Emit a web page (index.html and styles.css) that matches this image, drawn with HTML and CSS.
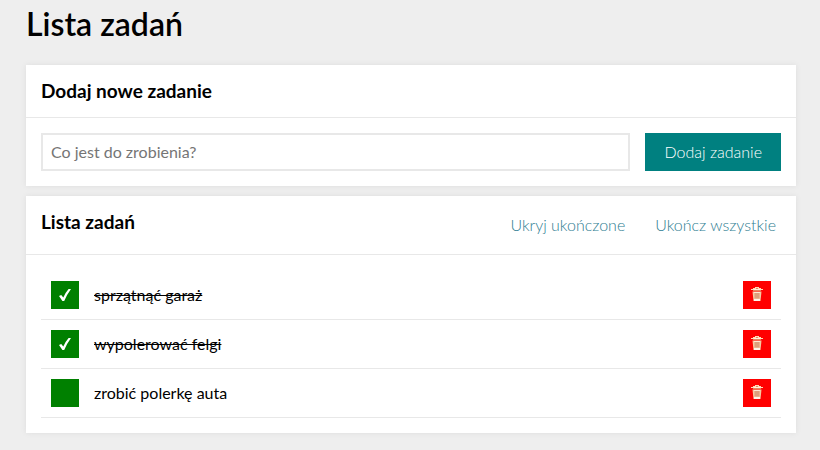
FILE: index.html
```html
<!DOCTYPE html>
<html lang="pl">
<head>
<meta charset="utf-8">
<meta name="viewport" content="width=device-width, initial-scale=1">
<title>Lista zadań</title>
<link rel="stylesheet" href="styles.css">
</head>
<body>
<svg class="sprite" aria-hidden="true">
  <symbol id="check" viewBox="0 0 28 28">
    <path d="M8 15 L10.2 14 L12.3 16.6 Q14.5 11.4 17.6 8 L20 8 Q16 13.4 13.2 20 L11.4 20 Z" fill="#fff"/>
  </symbol>
  <symbol id="trash" viewBox="0 0 28 28">
    <path d="M9.5 10.5 H18.5 L17.5 20 H10.5 Z" fill="#f6c8a0"/>
    <path d="M11.5 12 H16.5 V17.5 H11.5 Z" fill="#dd9f7c"/>
    <path d="M11 11.5 H17" stroke="#ffe9d5" stroke-width="1"/>
    <path d="M11 18 H17 V20 H11 Z" fill="#fff4ea"/>
    <path d="M12 6 H16 V7 H18 V8 H20 V9 H18 V10 H10 V9 H8 V8 H10 V7 H12 Z" fill="#ffdcb8"/>
    <path d="M13 7.5 H15 M10 9.5 H18" stroke="#e88960" stroke-width="1"/>
    <path d="M11 8.5 H17" stroke="#fff0df" stroke-width="1"/>
  </symbol>
</svg>
<main class="container">
  <h1 class="title">Lista zadań</h1>
  <section class="section">
    <header class="section-header">
      <h2 class="section-title">Dodaj nowe zadanie</h2>
    </header>
    <form class="form">
      <input class="form-input" type="text" placeholder="Co jest do zrobienia?" aria-label="Co jest do zrobienia?">
      <button class="form-button" type="submit">Dodaj zadanie</button>
    </form>
  </section>
  <section class="section">
    <header class="section-header section-header-tasks">
      <h2 class="section-title">Lista zadań</h2>
      <div class="actions">
        <button class="action" type="button">Ukryj ukończone</button>
        <button class="action" type="button">Ukończ wszystkie</button>
      </div>
    </header>
    <ul class="tasks">
      <li class="task">
        <span class="toggle"><input class="toggle-input" id="task-1" type="checkbox" checked><svg class="toggle-mark"><use href="#check"/></svg></span>
        <label class="task-text" for="task-1">sprzątnąć garaż</label>
        <button class="remove" type="button" aria-label="Usuń"><svg class="remove-icon"><use href="#trash"/></svg></button>
      </li>
      <li class="task">
        <span class="toggle"><input class="toggle-input" id="task-2" type="checkbox" checked><svg class="toggle-mark"><use href="#check"/></svg></span>
        <label class="task-text" for="task-2">wypolerować felgi</label>
        <button class="remove" type="button" aria-label="Usuń"><svg class="remove-icon"><use href="#trash"/></svg></button>
      </li>
      <li class="task">
        <span class="toggle"><input class="toggle-input" id="task-3" type="checkbox"><svg class="toggle-mark"><use href="#check"/></svg></span>
        <label class="task-text" for="task-3">zrobić polerkę auta</label>
        <button class="remove" type="button" aria-label="Usuń"><svg class="remove-icon"><use href="#trash"/></svg></button>
      </li>
    </ul>
  </section>
</main>
</body>
</html>
```
FILE: styles.css
```css
* {
  box-sizing: border-box;
}

body {
  margin: 0;
  background: #eee;
  color: #000;
  font: 16px/20px Lato, sans-serif;
}

button,
input {
  font: inherit;
}

.sprite {
  display: none;
}

.container {
  max-width: 900px;
  margin: 0 auto;
  padding: 4px 24px 16px 26px;
}

.title {
  margin: 0 0 21px;
  font-size: 32px;
  font-weight: 600;
  line-height: 40px;
}

.section {
  margin-bottom: 10px;
  background: #fff;
  box-shadow: 0 0 5px #ddd;
}

.section-header {
  display: flex;
  justify-content: space-between;
  padding: 15px;
  border-bottom: 1px solid #e8e8e8;
}

.section-header-tasks {
  padding-right: 20px;
}

.section-title {
  margin: 0;
  font-size: 19px;
  font-weight: 700;
  line-height: 22px;
}

.actions {
  display: flex;
  gap: 30px;
}

.action {
  height: 28px;
  padding: 0;
  border: 0;
  background: none;
  color: #2f7e92;
  font-weight: 300;
}

.form {
  display: flex;
  gap: 15px;
  padding: 15px;
}

.form-input {
  flex: 1;
  min-width: 0;
  height: 38px;
  padding: 6px 8px 8px;
  border: 2px solid #e8e8e8;
  background: #fff;
}

.form-button {
  height: 38px;
  padding: 0 19px;
  border: 0;
  background: teal;
  color: #fff;
  font-weight: 300;
}

.tasks {
  margin: 0;
  padding: 16px 15px 15px;
  list-style: none;
}

.task {
  display: flex;
  align-items: center;
  gap: 15px;
  padding: 10px;
  border-bottom: 1px solid #e8e8e8;
}

.toggle {
  display: grid;
}

.toggle-input,
.toggle-mark {
  grid-area: 1 / 1;
  width: 28px;
  height: 28px;
  margin: 0;
}

.toggle-input {
  appearance: none;
  background: green;
}

.toggle-mark {
  visibility: hidden;
  pointer-events: none;
}

.toggle-input:checked + .toggle-mark {
  visibility: visible;
}

.task-text {
  flex: 1;
}

.toggle:has(:checked) + .task-text {
  text-decoration: line-through;
}

.remove {
  width: 28px;
  height: 28px;
  padding: 0;
  border: 0;
  background: red;
}

.remove-icon {
  display: block;
  width: 28px;
  height: 28px;
}
```
